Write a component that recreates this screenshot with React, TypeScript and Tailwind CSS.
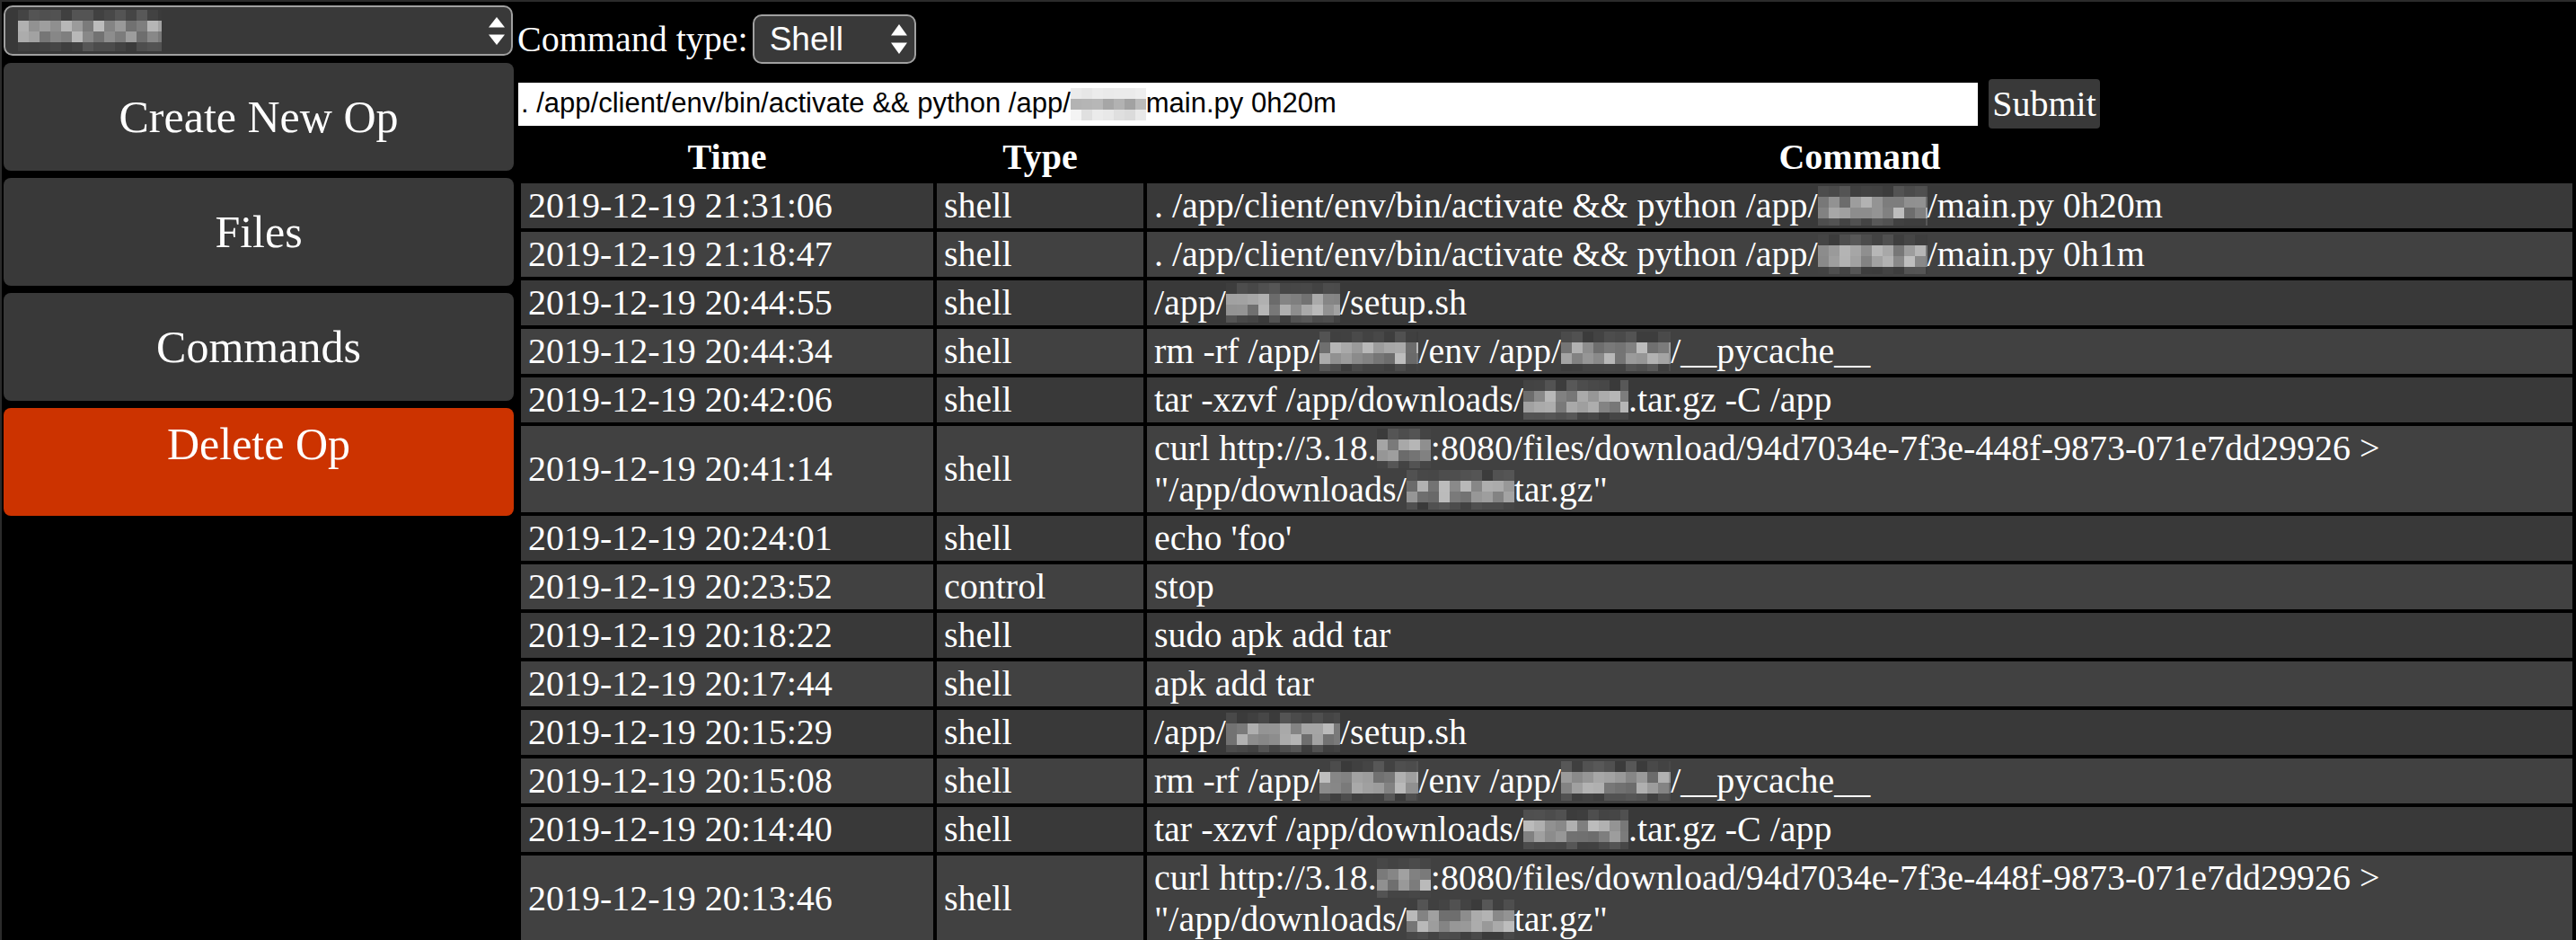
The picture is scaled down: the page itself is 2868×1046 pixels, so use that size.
import React from 'react';

// pixelated "redacted" block, drawn as a grid of grey squares
function Mosaic({ w, h = 44, seed = 1, tone = 'dark' }: { w: number; h?: number; seed?: number; tone?: 'dark' | 'light' }) {
  const cell = 12;
  const cols = Math.ceil(w / cell);
  const rows = Math.ceil(h / cell);
  let s = seed * 7919 + 17;
  const rnd = () => {
    s = (s * 9301 + 49297) % 233280;
    return s / 233280;
  };
  const rects: React.ReactNode[] = [];
  for (let r = 0; r < rows; r++) {
    for (let c = 0; c < cols; c++) {
      const edge = r === 0 || r === rows - 1;
      let g: number;
      if (tone === 'dark') g = edge ? 58 + rnd() * 30 : 105 + rnd() * 85;
      else g = edge ? 215 + rnd() * 30 : 150 + rnd() * 70;
      g = Math.round(g);
      rects.push(
        <rect key={r + '-' + c} x={c * cell} y={r * cell} width={cell} height={cell} fill={`rgb(${g},${g},${g})`} />
      );
    }
  }
  return (
    <svg width={w} height={h} viewBox={`0 0 ${w} ${h}`} className="inline-block align-[-9px]">
      {rects}
    </svg>
  );
}

function Arrows({ h = 34 }: { h?: number }) {
  return (
    <svg width="20" height={h} viewBox="0 0 20 34" preserveAspectRatio="none">
      <path d="M10 1 L19 13 L1 13 Z" fill="white" />
      <path d="M10 33 L19 21 L1 21 Z" fill="white" />
    </svg>
  );
}

const rows: { t: string; k: string; c: React.ReactNode }[] = [
  { t: '2019-12-19 21:31:06', k: 'shell', c: <>{'. /app/client/env/bin/activate && python /app/'}<Mosaic w={122} seed={1} />{'/main.py 0h20m'}</> },
  { t: '2019-12-19 21:18:47', k: 'shell', c: <>{'. /app/client/env/bin/activate && python /app/'}<Mosaic w={122} seed={2} />{'/main.py 0h1m'}</> },
  { t: '2019-12-19 20:44:55', k: 'shell', c: <>{'/app/'}<Mosaic w={127} seed={3} />{'/setup.sh'}</> },
  { t: '2019-12-19 20:44:34', k: 'shell', c: <>{'rm -rf /app/'}<Mosaic w={110} seed={4} />{'/env /app/'}<Mosaic w={122} seed={5} />{'/__pycache__'}</> },
  { t: '2019-12-19 20:42:06', k: 'shell', c: <>{'tar -xzvf /app/downloads/'}<Mosaic w={117} seed={6} />{'.tar.gz -C /app'}</> },
  {
    t: '2019-12-19 20:41:14',
    k: 'shell',
    c: (
      <>
        {'curl http://3.18.'}<Mosaic w={60} seed={7} />{':8080/files/download/94d7034e-7f3e-448f-9873-071e7dd29926 >'}
        <br />
        {'"/app/downloads/'}<Mosaic w={120} seed={8} />{'tar.gz"'}
      </>
    ),
  },
  { t: '2019-12-19 20:24:01', k: 'shell', c: <>{"echo 'foo'"}</> },
  { t: '2019-12-19 20:23:52', k: 'control', c: <>stop</> },
  { t: '2019-12-19 20:18:22', k: 'shell', c: <>sudo apk add tar</> },
  { t: '2019-12-19 20:17:44', k: 'shell', c: <>apk add tar</> },
  { t: '2019-12-19 20:15:29', k: 'shell', c: <>{'/app/'}<Mosaic w={127} seed={9} />{'/setup.sh'}</> },
  { t: '2019-12-19 20:15:08', k: 'shell', c: <>{'rm -rf /app/'}<Mosaic w={110} seed={10} />{'/env /app/'}<Mosaic w={122} seed={11} />{'/__pycache__'}</> },
  { t: '2019-12-19 20:14:40', k: 'shell', c: <>{'tar -xzvf /app/downloads/'}<Mosaic w={117} seed={12} />{'.tar.gz -C /app'}</> },
  {
    t: '2019-12-19 20:13:46',
    k: 'shell',
    c: (
      <>
        {'curl http://3.18.'}<Mosaic w={60} seed={13} />{':8080/files/download/94d7034e-7f3e-448f-9873-071e7dd29926 >'}
        <br />
        {'"/app/downloads/'}<Mosaic w={120} seed={14} />{'tar.gz"'}
      </>
    ),
  },
];

export default function App() {
  return (
    <div className="min-h-screen bg-black border-t-2 border-l-2 border-[#2b2b2b] flex items-start text-white font-['Liberation_Serif','Times_New_Roman',serif]">
      {/* sidebar */}
      <aside className="w-[570px] shrink-0 pl-[2px] pt-[4px] flex flex-col gap-[8px]">
        <div className="h-[56px] w-[567px] rounded-[10px] border-2 border-[#a0a0a0] bg-[#393939] flex items-center justify-between pl-[14px] pr-[6px]">
          <Mosaic w={160} h={46} seed={21} />
          <Arrows h={33} />
        </div>
        <button className="h-[120px] w-[568px] rounded-[8px] bg-[#393939] text-[50px] leading-[57px] text-white">
          Create New Op
        </button>
        <button className="h-[120px] w-[568px] rounded-[8px] bg-[#393939] text-[50px] leading-[57px] text-white">
          Files
        </button>
        <button className="h-[120px] w-[568px] rounded-[8px] bg-[#393939] text-[50px] leading-[57px] text-white">
          Commands
        </button>
        <div className="h-[120px] w-[568px] rounded-[8px] bg-[#cc3300] text-[50px] leading-[57px] text-white text-center pt-[12px]">
          Delete Op
        </div>
      </aside>

      {/* main */}
      <main className="flex-1 min-w-0 pl-[4px]">
        <div className="mt-[14px] h-[55px] flex items-center">
          <span className="text-[40px] leading-[46px]">Command type:</span>
          <div className="ml-[5px] h-[55px] w-[182px] rounded-[10px] border-2 border-[#a0a0a0] bg-[#393939] flex items-center justify-between pl-[17px] pr-[7px] font-['Liberation_Sans',Arial,sans-serif] text-[37px]">
            <span>Shell</span>
            <Arrows h={35} />
          </div>
        </div>

        <div className="mt-[17px] h-[55px] flex items-center">
          <div className="ml-[1px] h-[48px] w-[1625px] bg-white text-black flex items-center pl-[3px] whitespace-nowrap overflow-hidden font-['Liberation_Sans',Arial,sans-serif] text-[31px]">
            {'. /app/client/env/bin/activate && python /app/'}
            <Mosaic w={84} h={36} seed={31} tone="light" />
            {'main.py 0h20m'}
          </div>
          <button className="ml-[12px] h-[55px] w-[124px] rounded-[4px] bg-[#393939] text-[40px] leading-[46px] text-white">
            Submit
          </button>
        </div>

        <table className="mt-[3px] w-full table-fixed border-separate border-spacing-[4px] text-[40px] leading-[46px]">
          <thead>
            <tr>
              <th className="w-[459px] py-[2px] font-bold text-center">Time</th>
              <th className="w-[230px] py-[2px] font-bold text-center">Type</th>
              <th className="py-[2px] font-bold text-center">Command</th>
            </tr>
          </thead>
          <tbody>
            {rows.map((r, i) => {
              const bg = i % 2 === 0 ? 'bg-[#393939]' : 'bg-[#414141]';
              return (
                <tr key={i}>
                  <td className={`${bg} px-[8px] py-[2px] align-middle whitespace-nowrap`}>{r.t}</td>
                  <td className={`${bg} px-[8px] py-[2px] align-middle`}>{r.k}</td>
                  <td className={`${bg} px-[8px] py-[2px] align-middle whitespace-nowrap`}>{r.c}</td>
                </tr>
              );
            })}
          </tbody>
        </table>
      </main>
    </div>
  );
}
